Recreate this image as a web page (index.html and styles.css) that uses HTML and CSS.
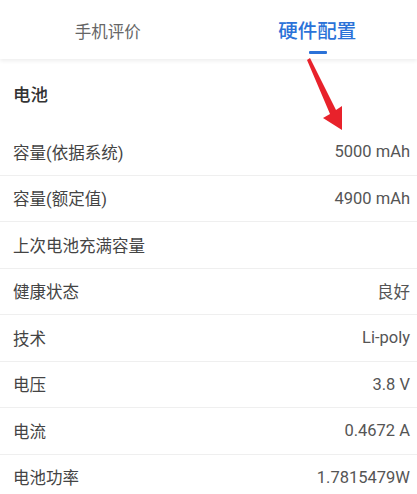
FILE: index.html
```html
<!DOCTYPE html>
<html lang="zh-CN">
<head>
  <meta charset="UTF-8" />
  <meta name="viewport" content="width=device-width, initial-scale=1.0"/>
  <title>硬件配置</title>
  <link rel="stylesheet" href="styles.css">
</head>
<body>
  <div class="tabs">
    <div class="tab">手机评价</div>
    <div class="tab active">硬件配置</div>
  </div>

  <div class="section-title">电池</div>

  <div class="list">
    <div class="row"><span>容量(依据系统)</span><span class="value">5000 mAh</span></div>
    <div class="row"><span>容量(额定值)</span><span class="value">4900 mAh</span></div>
    <div class="row"><span>上次电池充满容量</span><span class="value"></span></div>
    <div class="row"><span>健康状态</span><span class="value">良好</span></div>
    <div class="row"><span>技术</span><span class="value">Li-poly</span></div>
    <div class="row"><span>电压</span><span class="value">3.8 V</span></div>
    <div class="row"><span>电流</span><span class="value">0.4672 A</span></div>
    <div class="row"><span>电池功率</span><span class="value">1.7815479W</span></div>
  </div>

  <!-- annotation arrow -->
  <svg class="arrow" width="60" height="80" viewBox="0 0 60 80">
    <path d="M4 2 L7 0 L33 52 L39 48 L39 72 L20 60 L27 56 Z" fill="#e8222b"/>
  </svg>
</body>
</html>
```

FILE: styles.css
```css
:root {
  --blue: #2b72d8;
  --line: #efefef;
  --label: #444;
  --value: #555;
}

body {
  margin: 0;
  font-family: Roboto, "Noto Sans CJK SC", sans-serif;
  background: #fff;
  color: var(--label);
  width: 417px;
  height: 494px;
  overflow: hidden;
  position: relative;
}

.tabs {
  display: flex;
  height: 59px;
  background: #fff;
  box-shadow: 0 2px 4px rgba(0, 0, 0, 0.07);
  position: relative;
}

.tab {
  flex: 1;
  display: flex;
  align-items: center;
  justify-content: center;
  font-size: 16.5px;
  color: #666;
  padding: 3px 0 0 8px;
}

.tab.active {
  color: var(--blue);
  font-size: 19.5px;
  font-weight: 500;
  position: relative;
  padding: 0 0 1px 10px;
}

.tab.active::after {
  content: "";
  position: absolute;
  left: 50%;
  bottom: 5px;
  width: 18px;
  height: 3px;
  margin-left: -3px;
  background: var(--blue);
  border-radius: 1px;
}

.section-title {
  height: 69px;
  display: flex;
  align-items: center;
  padding: 0 13px;
  font-size: 17.5px;
  font-weight: 500;
  color: #333;
  padding-bottom: 1px;
}

.row {
  display: flex;
  align-items: center;
  justify-content: space-between;
  height: 45.5px;
  padding: 0 7px 0 13px;
  border-bottom: 1px solid var(--line);
  font-size: 16.5px;
}

.value {
  color: var(--value);
}

.arrow {
  position: absolute;
  left: 303px;
  top: 58px;
}
```
